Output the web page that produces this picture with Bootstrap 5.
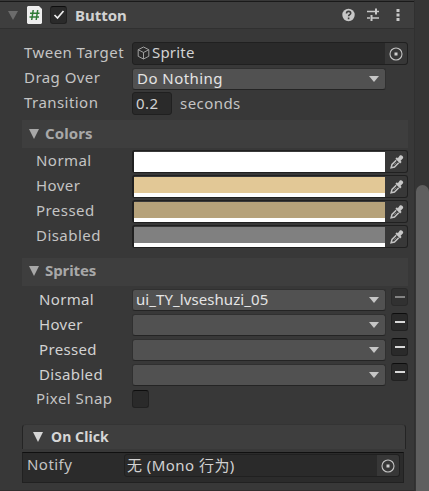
<!DOCTYPE html>
<html lang="en">
<head>
<meta charset="utf-8">
<title>Button inspector</title>
<link href="https://cdn.jsdelivr.net/npm/bootstrap@5.3.0/dist/css/bootstrap.min.css" rel="stylesheet">
<style>
body{background:#383838;color:#c4c4c4;font:15px/22px "Noto Sans","Noto Sans CJK SC",sans-serif;letter-spacing:.45px;height:491px;overflow:hidden;white-space:nowrap}
svg{display:block;flex:none}
.panel{width:414px;height:491px}
.gutter{width:15px;background:#353535;border-left:1px solid #303030;padding:185px 0 0 1px}
.thumb{height:306px;width:13px;background:#5f5f5f;border-radius:7px 7px 0 0}
.head{background:#3e3e3e;border-top:1px solid #1a1a1a;border-bottom:1px solid #303030;margin-top:1px;height:28px;padding-left:7px}
.head .tick{margin:4px 0 0 8px}
.title{font-weight:700;line-height:26px;letter-spacing:0;color:#d2d2d2;margin-left:8px}
.inspector{padding:12px 6px 0 22px}
.prop{height:25px}
.lab{width:110px;padding-left:2px;flex:none}
.lab1{padding-left:14px}
.lab2{padding-left:17px;padding-top:1px;color:#d2d2d2;letter-spacing:.35px}
.field{height:23px;margin-top:1px;background:#2a2a2a;border:1px solid #202020;border-radius:3px;line-height:20px;color:#d2d2d2}
.field.obj{line-height:18px}
.pick{width:22px;background:#373737;border-radius:0 3px 3px 0}
.drop{height:22px;width:254px;margin-top:2px;background:#515151;border:1px solid #303030;border-bottom-color:#242424;border-radius:3px;color:#e4e4e4;line-height:18px;padding:0 6px 0 4px}
.drop svg{margin-top:7px}
.tight{letter-spacing:.08px;margin-left:-1px}
.group-head{height:28px;background:#3e3e3e;font-weight:700;line-height:26px;color:#a8a8a8;padding-left:7px;letter-spacing:.1px;margin-bottom:1px}
.group-head svg{margin:9px 6px 0 0}
.group-head.second{line-height:24px;margin-top:9px;letter-spacing:-.1px}
.group-head.second svg{margin-top:8px}
.swatch{height:23px;margin-top:1px;border:1px solid #202020;border-left-width:2px;border-radius:3px;padding-top:1px}
.tone{height:20px;border-bottom:4px solid #fff}
.white{background:#fff}.sand{background:#e2c896}.khaki{background:#b6a27a}.gray{background:#808080}
.tick{width:17px;height:18px;background:#2a2a2a;border:1px solid #212121;border-top-color:#0d0d0d;border-radius:3px}
.minus{margin-top:1px}
.minus::before{content:"";width:10px;height:2px;background:#d8d8d8;margin-bottom:1px}
.minus.off{background:#313131;border-color:#2a2a2a}
.minus.off::before{background:#838383}
.event-head{width:384px;height:25px;margin-top:12px;background:#3e3e3e;border:1px solid #242424;border-bottom:0;border-top-color:#343434;border-radius:4px 4px 0 0;font-weight:700;font-size:14px;letter-spacing:.1px;line-height:24px;color:#d6d6d6;padding-left:10px}
.event-body{width:382px;height:31px;margin-top:3px;background:#2b2b2b;border:1px solid #212121;border-top-color:#101010;padding-left:4px}
.foot{height:1px;margin:7px -6px 0 -22px;background:#302d2d}
</style>
<script src="https://cdn.jsdelivr.net/npm/bootstrap@5.3.0/dist/js/bootstrap.bundle.min.js"></script>
</head>
<body>
<svg width="0" height="0" class="position-absolute">
<symbol id="down" viewBox="0 0 10 10"><path d="M0 0h10L5 10z" fill="currentColor"/></symbol>
<symbol id="caret" viewBox="0 0 10 6"><path d="M0 0h10L5 6z" fill="#c6c6c6"/></symbol>
<symbol id="target" viewBox="0 0 14 14"><circle cx="7" cy="7" r="6" fill="none" stroke="#c4c4c4" stroke-width="1.1"/><path d="M5.5 5.5h3v3h-3z" fill="#d0d0d0"/></symbol>
<symbol id="dropper" viewBox="0 0 14 14"><path d="M7.800 3.200 9.800.6c1.800-1.300 4.400 1.200 3 3L10.600 5.800l1 1.200-1.500 1.500-4.700-4.700 1.500-1.500z" fill="#c8c8c8"/><path d="M6.200 5.200 2 9.400l-.9 3.400L4.500 12l4.200-4.200" fill="none" stroke="#c4c4c4" stroke-width="1.500"/><path d="m4.200 9.700 2-2" stroke="#c4c4c4" stroke-width=".6"/></symbol>
</svg>
<div class="d-flex">
<main class="panel">
<header class="head d-flex align-items-start">
<svg width="12" height="26"><path d="M1 9h10L6 18z" fill="#6c6c6c"/></svg>
<svg width="15" height="18" class="ms-2 mt-1" viewBox="0 0 15 18"><path d="M1 0h11l3 3v14l-1 1H1l-1-1V1z" fill="#eee"/><path d="m6.200 4-1.500 10M10.700 4 9.200 14M3 7.200h9.500M2.500 11H12" stroke="#2f7a36" stroke-width="1.500"/></svg>
<span class="tick d-flex align-items-center justify-content-center"><svg width="12" height="10"><path d="m1.500 5 3 3L10.500 1" fill="none" stroke="#eee" stroke-width="1.700"/></svg></span>
<span class="title">Button</span>
<svg class="ms-auto" width="13" height="26" viewBox="0 0 13 26"><circle cx="6.500" cy="13" r="6.200" fill="#c8c8c8"/><path d="M4.500 11.500c0-3 4.200-2.700 4.200-.3 0 1.500-2.100 1.500-2.100 3.100m0 1.200v1.700" fill="none" stroke="#3e3e3e" stroke-width="1.600"/></svg>
<svg width="12" height="26" style="margin-left:12px"><path d="M0 9.500h8M10 9.500h2M0 16h3M5 16h7" fill="none" stroke="#c8c8c8" stroke-width="1.300"/><path d="M9 6.500v6M4.500 13v6" stroke="#c8c8c8" stroke-width="2"/></svg>
<svg width="4" height="26" style="margin:0 14px 0 17px"><path d="M.5 7h3v3h-3zM.5 11.500h3v3h-3zM.5 16h3v3h-3z" fill="#c8c8c8"/></svg>
</header>
<section class="inspector">
<div class="prop d-flex"><span class="lab">Tween Target</span>
<div class="field obj flex-fill d-flex"><svg width="13" height="14" class="ms-1" style="margin-top:3px" viewBox="0 0 13 14"><path d="m6.500 1 5.300 2.700v6.600L6.500 13l-5.300-2.700V3.700zM1.200 3.700l5.300 2.800 5.300-2.800M6.500 6.500V13" fill="none" stroke="#a0a0a0"/></svg><span style="margin-left:2px;letter-spacing:.2px">Sprite</span><span class="pick ms-auto d-flex align-items-center justify-content-center"><svg width="14" height="14"><use href="#target"/></svg></span></div></div>
<div class="prop d-flex"><span class="lab">Drag Over</span><div class="drop d-flex justify-content-between align-items-start">Do Nothing<svg width="10" height="6"><use href="#caret"/></svg></div></div>
<div class="prop d-flex"><span class="lab">Transition</span><div class="field" style="width:40px;padding-left:3px">0.2</div><span style="margin-left:8px;padding-top:1px">seconds</span></div>

<div class="group-head d-flex mt-1"><svg width="10" height="10"><use href="#down"/></svg><span>Colors</span></div>
<div class="prop d-flex"><span class="lab lab1">Normal</span><div class="swatch flex-fill d-flex"><div class="tone white flex-fill"></div><svg width="22" height="20" viewBox="-5 -3 22 20"><use href="#dropper" width="14" height="14"/></svg></div></div>
<div class="prop d-flex"><span class="lab lab1">Hover</span><div class="swatch flex-fill d-flex"><div class="tone sand flex-fill"></div><svg width="22" height="20" viewBox="-5 -3 22 20"><use href="#dropper" width="14" height="14"/></svg></div></div>
<div class="prop d-flex"><span class="lab lab1">Pressed</span><div class="swatch flex-fill d-flex"><div class="tone khaki flex-fill"></div><svg width="22" height="20" viewBox="-5 -3 22 20"><use href="#dropper" width="14" height="14"/></svg></div></div>
<div class="prop d-flex"><span class="lab lab1">Disabled</span><div class="swatch flex-fill d-flex"><div class="tone gray flex-fill"></div><svg width="22" height="20" viewBox="-5 -3 22 20"><use href="#dropper" width="14" height="14"/></svg></div></div>

<div class="group-head second d-flex"><svg width="10" height="10"><use href="#down"/></svg><span>Sprites</span></div>
<div class="prop d-flex"><span class="lab lab2">Normal</span><div class="drop d-flex justify-content-between align-items-start"><span class="tight">ui_TY_lvseshuzi_05</span><svg width="10" height="6"><use href="#caret"/></svg></div><span class="tick minus off ms-auto d-flex align-items-center justify-content-center"></span></div>
<div class="prop d-flex"><span class="lab lab2">Hover</span><div class="drop d-flex justify-content-end align-items-start"><svg width="10" height="6"><use href="#caret"/></svg></div><span class="tick minus ms-auto d-flex align-items-center justify-content-center"></span></div>
<div class="prop d-flex"><span class="lab lab2">Pressed</span><div class="drop d-flex justify-content-end align-items-start"><svg width="10" height="6"><use href="#caret"/></svg></div><span class="tick minus ms-auto d-flex align-items-center justify-content-center"></span></div>
<div class="prop d-flex"><span class="lab lab2">Disabled</span><div class="drop d-flex justify-content-end align-items-start"><svg width="10" height="6"><use href="#caret"/></svg></div><span class="tick minus ms-auto d-flex align-items-center justify-content-center"></span></div>
<div class="prop d-flex"><span class="lab lab1">Pixel Snap</span><span class="tick" style="margin-top:3px"></span></div>

<div class="event-head d-flex"><svg width="10" height="10" style="margin-top:7px"><use href="#down"/></svg><span class="ms-2">On Click</span></div>
<div class="event-body d-flex"><span style="width:97px">Notify</span><div class="field d-flex" style="width:276px;padding-left:2px"><span>无 (Mono 行为)</span><span class="pick ms-auto d-flex align-items-center justify-content-center"><svg width="14" height="14"><use href="#target"/></svg></span></div></div>
<div class="foot"></div>
</section>
</main>
<aside class="gutter"><div class="thumb"></div></aside>
</div>
</body>
</html>
